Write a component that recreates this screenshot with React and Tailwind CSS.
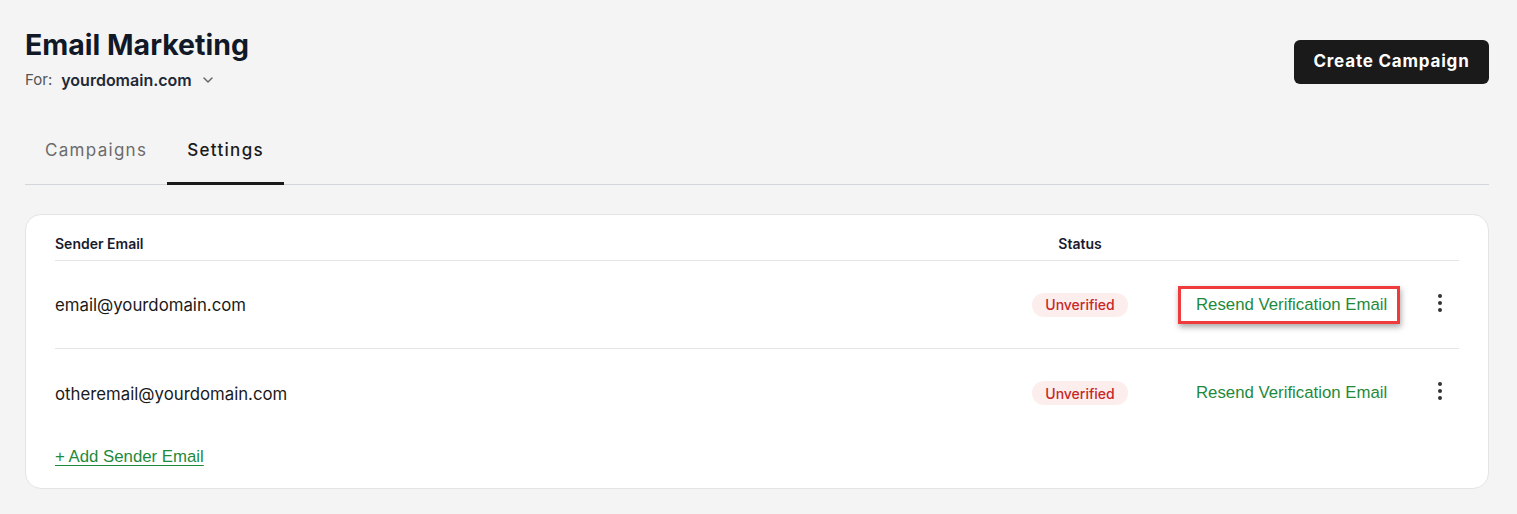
import React from 'react';
import { ChevronDown } from 'lucide-react';

const senders = [
  { email: 'email@yourdomain.com', status: 'Unverified', highlight: true },
  { email: 'otheremail@yourdomain.com', status: 'Unverified', highlight: false },
];

function Dots() {
  return (
    <svg width="6" height="20" viewBox="0 0 6 20" className="text-[#333]">
      <circle cx="3" cy="3" r="2" fill="currentColor" />
      <circle cx="3" cy="10" r="2" fill="currentColor" />
      <circle cx="3" cy="17" r="2" fill="currentColor" />
    </svg>
  );
}

export default function App() {
  const [tab, setTab] = React.useState('Settings');

  return (
    <div className="min-h-screen bg-[#f4f4f4] pl-[25px] pr-[28px] pt-[27px] pb-6" style={{ fontFamily: 'Inter, "Noto Sans", sans-serif' }}>
      {/* Header */}
      <div className="flex items-start justify-between">
        <div>
          <h1 className="text-[28.5px] leading-[36px] font-bold text-[#111827]">Email Marketing</h1>
          <div className="flex items-center mt-[5px]">
            <span className="text-[15px] text-[#555]">For:</span>
            <button className="flex items-center ml-[9px] text-[16px] font-semibold text-[#1f2937]">
              yourdomain.com
              <ChevronDown className="w-4 h-4 ml-[8px] text-[#666]" strokeWidth={2.25} />
            </button>
          </div>
        </div>
        <button className="mt-[13px] h-[44px] w-[195px] rounded-md bg-[#1a1a1a] text-white text-[17px] font-bold tracking-[0.8px]">
          Create Campaign
        </button>
      </div>

      {/* Tabs */}
      <div className="mt-[32px] flex border-b border-[#d3d7dc]">
        {['Campaigns', 'Settings'].map((t) => (
          <button
            key={t}
            onClick={() => setTab(t)}
            className={`px-5 h-[61px] pb-[4px] text-[17px] tracking-[1.3px] border-b-[3px] -mb-px ${tab === t ? 'text-[#1a1a1a] font-medium border-[#1a1a1a]' : 'text-[#6b6b6b] border-transparent'}`}
          >
            {t}
          </button>
        ))}
      </div>

      {/* Sender emails */}
      <div className="mt-[29px] bg-white rounded-2xl border border-[#e2e4e6] px-[29px]">
        <div className="flex items-center h-[46px] pt-[12px] border-b border-[#e2e4e6] text-[14px] font-semibold text-[#1a1a2e]">
          <div className="flex-1">Sender Email</div>
          <div className="w-[160px] text-center">Status</div>
          <div className="w-[260px]" />
          <div className="w-[39px]" />
        </div>
        {senders.map((s, i) => (
          <div key={s.email} className={`flex items-center h-[88px] ${i < senders.length - 1 ? 'border-b border-[#e2e4e6]' : ''}`}>
            <div className="flex-1 pt-[3px] text-[16.8px] text-[#1a1a1a]">{s.email}</div>
            <div className="w-[160px] flex justify-center">
              <span className="inline-flex items-center h-[24px] px-[13px] rounded-full bg-[#fdeeee] text-[14px] font-medium text-[#c62828]">{s.status}</span>
            </div>
            <div className="w-[260px] pl-[18px]">
              <a
                href="#"
                className={`inline-block pl-[15px] pr-[10px] py-[7px] text-[16.8px] leading-[18px] text-[#1e8a3c] border-[3px] ${s.highlight ? 'border-[#ef3b3b] shadow-[1px_3px_6px_rgba(0,0,0,0.35)]' : 'border-transparent'}`}
                style={{ fontFamily: '"Liberation Sans", Arial, sans-serif' }}
              >
                Resend Verification Email
              </a>
            </div>
            <div className="w-[39px] flex justify-center -mt-[4px]">
              <Dots />
            </div>
          </div>
        ))}
        <div className="pt-[7px] pb-[20px]">
          <a
            href="#"
            className="text-[16.8px] leading-[20px] text-[#1e8a3c] underline underline-offset-[3px]"
            style={{ fontFamily: '"Liberation Sans", Arial, sans-serif' }}
          >
            + Add Sender Email
          </a>
        </div>
      </div>
    </div>
  );
}
